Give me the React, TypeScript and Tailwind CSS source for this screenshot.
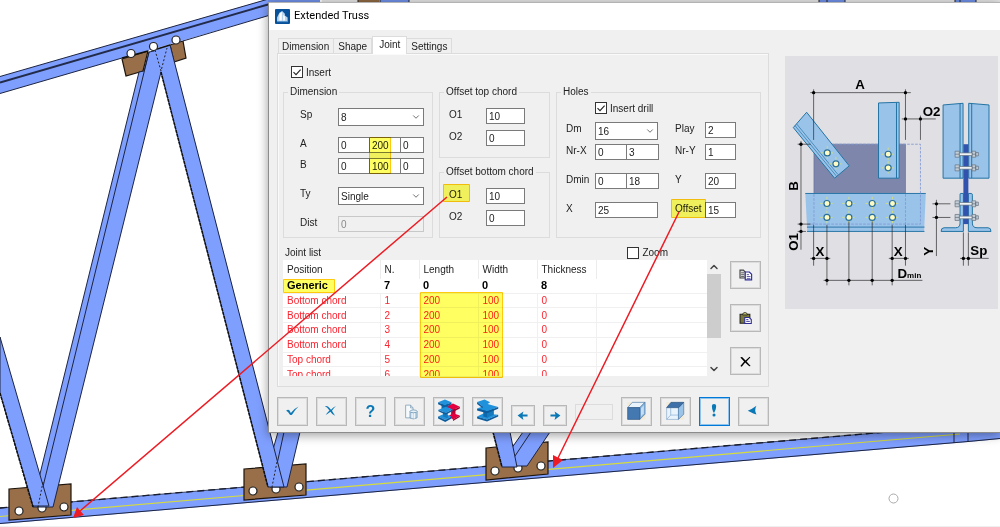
import React from 'react';
import { ChevronDown, ChevronUp } from 'lucide-react';

interface FieldProps {
  id: string;
  value: string;
  label?: string;
  className?: string;
  disabled?: boolean;
}

const TextField: React.FC<FieldProps> = ({ id, value, label, className = '', disabled }) => (
  <input
    id={id}
    type="text"
    aria-label={label}
    defaultValue={value}
    disabled={disabled}
    className={`h-4 min-w-0 border border-[#7a7a7a] bg-white pl-[2px] pt-px leading-[13px] text-[#222] outline-none disabled:border-[#c8c8c8] disabled:bg-[#f0f0f0] disabled:text-[#8a8a8a] ${className}`}
  />
);

const SelectField: React.FC<FieldProps> = ({ id, value, className = '' }) => (
  <div className={`relative h-[18px] ${className}`}>
    <select
      id={id}
      defaultValue={value}
      className="h-full w-full appearance-none border border-[#7a7a7a] bg-white pl-[2px] text-[#222] outline-none"
    >
      <option>{value}</option>
    </select>
    <ChevronDown size={10} strokeWidth={2} className="pointer-events-none absolute right-[3px] top-1 text-[#555]" />
  </div>
);

const Label: React.FC<{ htmlFor: string; className?: string; children: React.ReactNode }> = ({
  htmlFor,
  className = '',
  children,
}) => (
  <label htmlFor={htmlFor} className={`shrink-0 leading-[13px] ${className}`}>
    {children}
  </label>
);

const CheckField: React.FC<{ id: string; label: string; checked?: boolean }> = ({ id, label, checked }) => (
  <div className="flex h-3 items-center gap-[3px]">
    <span className="relative flex h-3 w-3">
      <input
        id={id}
        type="checkbox"
        defaultChecked={checked}
        className="peer h-3 w-3 appearance-none border border-[#333] bg-white"
      />
      <svg viewBox="0 0 12 12" className="pointer-events-none invisible absolute inset-0 h-3 w-3 peer-checked:visible">
        <path d="M2.5 6.2 5 8.6 9.6 3.6" fill="none" stroke="#222" strokeWidth="1.1" />
      </svg>
    </span>
    <label htmlFor={id}>{label}</label>
  </div>
);

const Group: React.FC<{ title: string; className?: string; children: React.ReactNode }> = ({
  title,
  className = '',
  children,
}) => (
  <fieldset className={`border border-[#dcdcdc] ${className}`}>
    <legend className="ml-1 px-[2px] leading-3">{title}</legend>
    {children}
  </fieldset>
);

const OffsetGroup: React.FC<{ title: string; prefix: string }> = ({ title, prefix }) => (
  <Group title={title} className="w-[111px] pb-[11px]">
    <div className="flex flex-col gap-[6px] pl-[9px] pt-[10px]">
      <div className="flex">
        <Label htmlFor={`${prefix}-o1`} className="w-[37px]">O1</Label>
        <TextField id={`${prefix}-o1`} value="10" className="w-[39px]" />
      </div>
      <div className="flex">
        <Label htmlFor={`${prefix}-o2`} className="w-[37px]">O2</Label>
        <TextField id={`${prefix}-o2`} value="0" className="w-[39px]" />
      </div>
    </div>
  </Group>
);

const joints = [
  { position: 'Bottom chord', n: 1 },
  { position: 'Bottom chord', n: 2 },
  { position: 'Bottom chord', n: 3 },
  { position: 'Bottom chord', n: 4 },
  { position: 'Top chord', n: 5 },
  { position: 'Top chord', n: 6 },
];

const JointTable = () => (
  <div className="flex h-[116px] w-0 flex-1">
    <div className="h-full min-w-0 flex-1 overflow-hidden bg-white">
      <table className="h-[122px] w-full table-fixed border-collapse text-left">
        <colgroup>
          <col className="w-[97px]" />
          <col className="w-[39px]" />
          <col className="w-[59px]" />
          <col className="w-[59px]" />
          <col className="w-[59px]" />
          <col />
        </colgroup>
        <thead>
          <tr className="h-[19px] text-[#222]">
            {['Position', 'N.', 'Length', 'Width', 'Thickness'].map((name) => (
              <th key={name} className="border-r border-[#ececec] p-0 pl-1 font-normal leading-[13px]">{name}</th>
            ))}
            <th className="p-0" />
          </tr>
        </thead>
        <tbody>
          <tr className="border-b border-[#f0f0f0] text-[11px] font-bold leading-[13px] text-black">
            {['Generic', '7', '0', '0', '8'].map((cell, i) => (
              <td key={i} className="p-0 pl-1">{cell}</td>
            ))}
            <td className="p-0" />
          </tr>
          {joints.map((joint) => (
            <tr key={joint.n} className="border-b border-[#f0f0f0] leading-[13px] text-[#fb2430]">
              {[joint.position, joint.n, 200, 100, 0].map((cell, i) => (
                <td key={i} className="border-r border-[#f0f0f0] p-0 pl-1">{cell}</td>
              ))}
              <td className="p-0" />
            </tr>
          ))}
        </tbody>
      </table>
    </div>
    <div className="flex w-[14px] flex-col items-center bg-[#f0f0f0] text-[#444]">
      <ChevronUp size={12} strokeWidth={3} className="my-px shrink-0" />
      <div className="h-16 w-full bg-[#cdcdcd]" />
      <ChevronDown size={12} strokeWidth={3} className="mb-px mt-auto shrink-0" />
    </div>
  </div>
);

const SideButton: React.FC<{ label: string; children: React.ReactNode }> = ({ label, children }) => (
  <button
    type="button"
    aria-label={label}
    className="flex h-7 w-[31px] items-center justify-center border border-[#b8b8b8] shadow-[inset_0_0_0_1px_#dcdcdc]"
  >
    {children}
  </button>
);

const ToolButton: React.FC<{ label: string; small?: boolean; active?: boolean; children: React.ReactNode }> = ({
  label,
  small,
  active,
  children,
}) => (
  <button
    type="button"
    aria-label={label}
    className={`flex items-center justify-center border ${small ? 'h-[21px] w-6' : 'h-[29px] w-[31px]'} ${
      active ? 'border-[#0078d7] shadow-[inset_0_0_0_1px_#8fc3ec]' : 'border-[#b8b8b8] shadow-[inset_0_0_0_1px_#dcdcdc]'
    }`}
  >
    {children}
  </button>
);

const Toolbar = () => (
  <div className="mt-[10px] flex items-end gap-2 text-[#0b78b6]">
    <ToolButton label="Confirm">
      <svg viewBox="22 38 93 87" className="h-full w-full" fill="currentColor">
        <path d="M48 79Q54 74 59 78L63 86Q73 72 88 65Q77 75 68 90Q62 96 58 89Q55 82 48 79Z" />
      </svg>
    </ToolButton>
    <ToolButton label="Cancel">
      <svg viewBox="139 38 93 87" className="h-full w-full" fill="currentColor">
        <path d="M164 64Q174 62 179 70L184 76Q191 67 200 64Q192 71 187 79L197 95Q189 93 182 82Q174 87 167 93Q171 85 179 78Q172 69 164 64Z" />
      </svg>
    </ToolButton>
    <ToolButton label="Help">
      <span className="text-[16px] font-bold leading-none">?</span>
    </ToolButton>
    <ToolButton label="Load data">
      <svg viewBox="373 38 93 87" className="h-full w-full">
        <path d="M407 61h16l8 9v32h-24z" fill="#f6fafc" stroke="#7d9db5" strokeWidth="2.5" />
        <path d="M423 61v9h8" fill="none" stroke="#7d9db5" strokeWidth="2.5" />
        <path d="M421 81v21q11 7 23 0V81z" fill="#b9d2e4" stroke="#5d86a5" strokeWidth="2" />
        <path d="M428 86v17M435 86v18" stroke="#f2f8fb" strokeWidth="4" />
        <ellipse cx="432.5" cy="81" rx="11.5" ry="4.5" fill="#e6f1f8" stroke="#5d86a5" strokeWidth="2" />
      </svg>
    </ToolButton>
    <ToolButton label="Split beam">
      <svg viewBox="490 38 93 87" className="h-full w-full">
        <path d="M545 67v30l14 7V73z" fill="#b90032" />
        <path d="M527 66l24-10 22 10-22 11z" fill="#e4003f" />
        <path d="M551 77l22-11v6l-22 11z" fill="#a4002d" />
        <path d="M536 96l15-9 22 7-22 13z" fill="#e4003f" />
        <path d="M551 107l22-13v5l-22 13z" fill="#a4002d" />
        <path d="M514 56h22v18h-22z" fill="#0c69ad" />
        <path d="M503 52l22-9 21 9-21 10z" fill="#2092dc" />
        <path d="M503 52l22 10 21-10v6l-21 10-22-10z" fill="#0d5c9d" />
        <path d="M503 98l20-9 23 9-20 11z" fill="#2092dc" />
        <path d="M503 98l23 11 20-11v6l-20 11-23-11z" fill="#0d5c9d" />
        <path d="M519 82l15 4v17l-15-5z" fill="#1479bd" />
        <path d="M504 76l24-10 22 9-23 11z" fill="#2092dc" />
        <path d="M504 76l23 10 23-11v5l-23 12-23-11z" fill="#0d5c9d" />
      </svg>
    </ToolButton>
    <ToolButton label="Beam">
      <svg viewBox="607 38 93 87" className="h-full w-full">
        <path d="M620 98l20-10 48 4-36 15z" fill="#2092dc" />
        <path d="M620 98l32 9 36-15v6l-36 16-32-10z" fill="#0d5c9d" />
        <path d="M634 62l20 16v24l-14-4V78z" fill="#0c69ad" />
        <path d="M652 80l22-8v20l-22 9z" fill="#1479bd" />
        <path d="M620 76l20-7 18 9-8 5z" fill="#0d5c9d" />
        <path d="M620 51l24-8 18 9-8 5 34 10-36 14-32-9 18-7z" fill="#2092dc" />
        <path d="M620 51l18 14v6l-18-14zM620 72l32 9 36-14v6l-36 14-32-9z" fill="#0d5c9d" />
      </svg>
    </ToolButton>
    <ToolButton label="Previous" small>
      <svg viewBox="0 0 24 21" className="h-full w-full" fill="currentColor">
        <path d="M6 10.5 12.5 6 11.5 9.5H17V11.5H11.5L12.5 15.5Z" />
      </svg>
    </ToolButton>
    <ToolButton label="Next" small>
      <svg viewBox="0 0 24 21" className="h-full w-full" fill="currentColor">
        <path d="M18 10.5 11.5 6 12.5 9.5H7V11.5H12.5L11.5 15.5Z" />
      </svg>
    </ToolButton>
    <div className="mb-[6px] h-4 w-[38px] border border-[#dcdcdc]" />
    <ToolButton label="Front view">
      <svg viewBox="364 38 93 87" className="h-full w-full">
        <path d="M381 52v55h55l3-3V52z" fill="#f1ead6" />
        <path d="M382 69l15-17h41l-16 17z" fill="#e8f2fb" stroke="#416f9f" strokeWidth="2" />
        <path d="M421 69l17-17v38l-17 17z" fill="#8fb9e0" stroke="#416f9f" strokeWidth="2" />
        <path d="M425 71l9-9v25l-9 10z" fill="#c5def5" />
        <path d="M382 69h39v38h-39z" fill="#4378b1" stroke="#244f80" strokeWidth="2" />
      </svg>
    </ToolButton>
    <ToolButton label="Top view">
      <svg viewBox="481 38 93 87" className="h-full w-full">
        <path d="M498 52v55h55l3-3V52z" fill="#f1ead6" />
        <path d="M499 69h38v38h-38z" fill="#e9f3fc" stroke="#7da5cc" strokeWidth="2" />
        <path d="M499 107l13-14h25M512 93V70" fill="none" stroke="#7da5cc" strokeWidth="2" />
        <path d="M537 69l17-17v38l-17 17z" fill="#9cc4e8" stroke="#416f9f" strokeWidth="2" />
        <path d="M499 69l14-17h41l-16 17z" fill="#3d70a8" stroke="#244f80" strokeWidth="2" />
      </svg>
    </ToolButton>
    <ToolButton label="Warnings" active>
      <svg viewBox="600 38 93 87" className="h-full w-full" fill="currentColor">
        <path d="M638 64q0-7 7-7t7 7q0 11-6 21h-3q-5-10-5-21z" />
        <circle cx="645" cy="93" r="5" />
      </svg>
    </ToolButton>
    <ToolButton label="Back">
      <svg viewBox="715 38 93 87" className="h-full w-full" fill="currentColor">
        <path d="M743 79Q758 73 771 63Q766 72 767 79Q768 84 771 91Q760 88 753 84Z" />
      </svg>
    </ToolButton>
  </div>
);

const boltHoles = [
  [142, 309], [168, 342], [325, 313], [325, 354],
  [141, 461], [207, 461], [277, 461], [338, 461],
  [141, 503], [207, 503], [277, 503], [338, 503],
];

const dimensionDots = [
  [101, 128], [377, 128], [377, 207], [422, 207], [63, 283], [63, 523], [63, 545],
  [101, 626], [141, 626], [337, 626], [377, 626], [141, 692], [207, 692], [277, 692], [337, 692],
  [470, 462], [470, 503], [551, 626], [566, 626],
];

// Joint diagram: front elevation on the left, section on the right
const JointDiagram = () => (
  <svg
    viewBox="15 18 640 760"
    role="img"
    aria-label="Joint dimensions"
    className="mt-[26px] h-[253px] w-[213px] shrink-0 bg-[#e0dfe4] font-['Liberation_Sans',Arial,sans-serif]"
  >
    <path d="M102 283h275v150H102z" fill="#7e87ab" stroke="#65719d" strokeWidth="2" />
    <path d="M76 431h362l-5 114H82z" fill="#9ac3ea" />
    <path d="M76 431h362M81 532h353M81 545h353" stroke="#2a76a8" strokeWidth="3" />
    <path d="M82 283h340v240H82M377 433v90M102 433v90" fill="none" stroke="#7f96d2" strokeWidth="2.5" strokeDasharray="8 4" />
    <g stroke="#2373a3" strokeWidth="3" fill="#9ac3ea">
      <path d="M80 187 208 348 164 385 40 233z" />
      <path d="M45 227 169 378M50 222 174 374" fill="none" strokeWidth="2" />
      <path d="M296 159 358 157V385H296z" />
      <path d="M350 158V385" fill="none" />
      <path d="M490 165 550 160V385H490zM567 160 628 165V385H567z" />
      <path d="M541 162V385M576 162V385" fill="none" />
    </g>
    <path d="M542 431q-1 0-1 5v84q0 14-14 14h-34q-9 0-9 11h67V431zM575 431q3 0 3 5v84q0 14 14 14h33q9 0 9 11h-68V431z" fill="#9ac3ea" stroke="#2373a3" strokeWidth="3" />
    <path d="M551 283h15v240h-15z" fill="#3152ad" />
    {[313, 354, 462, 503].map((y) => (
      <g key={y} stroke="#5e6b78" strokeWidth="2">
        <path d={`M526 ${y - 9}h13v18h-13zM577 ${y - 9}h11v18h-11zM588 ${y - 5}h8v10h-8zM526 ${y}h13M577 ${y}h11`} fill="#c3ced7" />
        <path d={`M539 ${y - 4}h38v8h-38z`} fill="#eef4f6" />
      </g>
    ))}
    {boltHoles.map(([x, y]) => (
      <g key={`${x}-${y}`}>
        <path d={`M${x - 20} ${y}h40M${x} ${y - 20}v40`} stroke="#d9e36b" strokeWidth="2.5" strokeDasharray="7 3" />
        <circle cx={x} cy={y} r="9" fill="#fffbc4" stroke="#2a6f96" strokeWidth="3.5" />
      </g>
    ))}
    <path
      d="M101 118V270M377 118V270M91 128H393M366 207H468M422 197V270M53 283H92M63 273V600M53 523H92M53 545H78M101 525V648M377 525V648M141 525V707M207 515V707M277 515V707M337 525V707M91 626H151M327 626H387M131 692H428M470 450V619M458 462H512M458 503H512M551 548V648M566 548V648M541 626H627"
      stroke="#222"
      strokeWidth="2"
    />
    {dimensionDots.map(([x, y]) => (
      <circle key={`${x}-${y}`} cx={x} cy={y} r="5" />
    ))}
    <g fontSize="40" fontWeight="bold">
      <text x="226" y="118">A</text>
      <text x="429" y="199">O2</text>
      <text x="107" y="618">X</text>
      <text x="342" y="618">X</text>
      <text x="572" y="615">Sp</text>
      <text x="353" y="684">D<tspan fontSize="24">min</tspan></text>
      <text transform="translate(54 423) rotate(-90)">B</text>
      <text transform="translate(54 603) rotate(-90)">O1</text>
      <text transform="translate(461 618) rotate(-90)">Y</text>
    </g>
  </svg>
);

const plates = [
  '9,489 71,484 71,515 9,520',
  '244,469 306,464 306,495 244,500',
  '486,448 548,442 548,474 486,480',
  '122,59 148,51 143,71 126,76',
  '170,45 183,41 186,58 174,62',
];

const bolts = [
  [19, 511], [42, 508], [64, 507],
  [253, 491], [276, 489], [299, 487],
  [495, 471], [518, 468], [541, 466],
];

const TrussView = () => (
  <svg width="1000" height="527" viewBox="0 0 1000 527" aria-hidden="true" className="absolute left-0 top-0">
    {/* bottom chord */}
    <path d="M0 508 887 432H1000V439L968 442 0 524z" fill="#7f9fff" />
    <path d="M0 523.5 968 441.5 1000 438.5" fill="none" stroke="#1c2440" />
    <path d="M0 508 887 432" stroke="#111" strokeWidth="1.3" strokeDasharray="7 4" />
    <path d="M0 508 887 432" stroke="#1c2440" strokeWidth="0.8" />
    <path d="M0 516.5 960 434" stroke="#d6dc3c" strokeWidth="1.2" />
    <path d="M954 432V443M968 432V442" stroke="#1c2440" />
    {plates.map((points) => (
      <polygon key={points} points={points} fill="#986f49" stroke="#1d150d" strokeWidth="1.2" />
    ))}
    {bolts.map(([x, y]) => (
      <circle key={x} cx={x} cy={y} r="4" fill="#fff" stroke="#222" strokeWidth="1.2" />
    ))}
    <g fill="#7f9fff" stroke="#1c2440">
      {/* rising webs */}
      <path d="M149 52 144 71 139 72 38 482 33 507H53L161 72 170 48z" />
      <path d="M149 52 38 507" />
      <path d="M278 432 270 460V487H287L300 432z" />
      <path d="M284 432 272 487" />
      <path d="M523 432 509 452V466H527L550 432z" />
      <path d="M531 432 509 465" />
      {/* falling webs */}
      <path d="M0 337 49 506H33L0 393z" />
      <path d="M154 50 170 45 284 487H268L161 72z" stroke="none" />
      <path d="M170 45 284 487H268L161 72" />
      <path d="M493 432 502 467H517L510 432z" />
    </g>
    <path d="M0 393 33 507M161 72 268 487M493 432 502 467" fill="none" stroke="#111" strokeWidth="1.5" strokeDasharray="3 1" />
    <path d="M43 482 38 507M277 462 272 487M155 50 161 71 167 48" fill="none" stroke="#222" strokeDasharray="2 2" />
    {/* top chord */}
    <path d="M0 76.5 268-1H278V13L0 93.5z" fill="#7f9fff" />
    <path d="M0 76.5 272-2M0 93.5 122 58M183 41 272 14.5" stroke="#1c2440" />
    <path d="M0 82.5 268 4.5" stroke="#222b4a" strokeWidth="2" />
    <path d="M122 58 148 51M157 49 170 45" stroke="#111" strokeWidth="1.8" />
    {[[131, 53.5], [153.5, 46.5], [176, 40]].map(([x, y]) => (
      <circle key={x} cx={x} cy={y} r="4" fill="#fff" stroke="#222" strokeWidth="1.2" />
    ))}
    <path d="M322 0H1000V2H322z" fill="#e6e6e6" />
    <path d="M268 0H320V2H268zM380 0H409V2H380zM819 0H845V2H819zM955 0H976V2H955z" fill="#6f90e8" />
    <path d="M358 0H379V2H358z" fill="#8f6842" />
    <path d="M358 0V2M380 0V2M409 0V2M819 0V2M827 0V2M845 0V2M955 0V2M960 0V2M976 0V2" stroke="#222" />
    <circle cx="893.5" cy="498.5" r="4.5" fill="#fff" stroke="#aaa" />
    <path d="M0 526.5H1000" stroke="#efefef" />
  </svg>
);

const Annotations = () => (
  <>
    <svg
      width="1000"
      height="527"
      viewBox="0 0 1000 527"
      aria-hidden="true"
      className="pointer-events-none absolute left-0 top-0 mix-blend-multiply"
    >
      <g fill="#ffff62" stroke="#ffc90e">
        <path d="M369.5 137.5h21v36h-21z" />
        <path d="M443.5 184.5h26v17h-26z" />
        <path d="M671.5 199.5h34v18h-34z" />
        <path d="M283.5 279.5h51v13h-51z" />
        <path d="M420.5 292.5h82v85h-82z" />
      </g>
    </svg>
    <svg
      width="1000"
      height="527"
      viewBox="0 0 1000 527"
      aria-hidden="true"
      className="pointer-events-none absolute left-0 top-0"
    >
      <path d="M447 197 80 511M679 212 558 458" stroke="#ed1c24" strokeWidth="1.5" />
      <path d="M73 518 77 507 84 515zM553 468V455L563 460z" fill="#ed1c24" />
    </svg>
  </>
);

const tabs = ['Dimension', 'Shape', 'Joint', 'Settings'];

export default function App() {
  return (
    <div className="relative min-h-screen overflow-hidden bg-white font-['Liberation_Sans',Arial,sans-serif] text-[10px] text-[#222]">
      <TrussView />
      <main className="absolute left-[268px] right-0 top-[2px] border-b border-l border-t border-[#8c8c8c] border-t-[#b4b4b4] bg-[#f0f0f0] pb-[6px] shadow-[0_2px_10px_rgba(0,0,0,0.4)]">
        <header className="flex h-[27px] items-center gap-1 bg-white pl-[6px]">
          <svg viewBox="0 0 44 44" className="h-[15px] w-[15px]">
            <rect width="44" height="44" rx="3" fill="#07519a" />
            <path d="M6 36V25l7-14 8-5 8 8v5l8 6v11z" fill="#b8d3ec" />
            <path d="M13 34V15l7-7v26zM24 34V17l5 5v12z" fill="#fff" />
            <path d="M6 37h32" stroke="#5c97cc" strokeWidth="3" />
          </svg>
          <h1 className="font-[Roboto,sans-serif] text-[11px] text-black">Extended Truss</h1>
        </header>

        <div className="flex gap-4 pl-2">
          <div className="shrink-0">
            <div role="tablist" className="flex h-[23px] items-end pl-px">
              {tabs.map((tab) => (
                <button
                  key={tab}
                  type="button"
                  role="tab"
                  aria-selected={tab === 'Joint'}
                  className={
                    tab === 'Joint'
                      ? 'relative -mb-px h-[18px] border border-b-0 border-[#dcdcdc] bg-white px-[6px] pb-[2px]'
                      : 'h-[15px] border border-b-0 border-l-0 border-[#dcdcdc] px-[4px] first:border-l first:pl-[3px]'
                  }
                >
                  {tab}
                </button>
              ))}
            </div>

            <section className="border border-[#dcdcdc] pb-[10px] pl-[5px] pr-[7px] pt-3 shadow-[inset_1px_1px_0_#fafafa]">
              <div className="pl-2">
                <CheckField id="insert" label="Insert" checked />
              </div>

              <div className="mt-2 flex gap-[6px]">
                <Group title="Dimension" className="w-[150px]">
                  <div className="flex flex-col pl-4 pt-[10px]">
                    <div className="flex">
                      <Label htmlFor="sp" className="w-[38px]">Sp</Label>
                      <SelectField id="sp" value="8" className="w-[86px]" />
                    </div>
                    <div className="mt-[11px] flex">
                      <Label htmlFor="a" className="w-[38px]">A</Label>
                      <TextField id="a" value="0" className="w-8" />
                      <TextField id="a-length" label="A length" value="200" className="-ml-px w-8" />
                      <TextField id="a-end" label="A end" value="0" className="-ml-px w-6" />
                    </div>
                    <div className="mt-[5px] flex">
                      <Label htmlFor="b" className="w-[38px]">B</Label>
                      <TextField id="b" value="0" className="w-8" />
                      <TextField id="b-length" label="B length" value="100" className="-ml-px w-8" />
                      <TextField id="b-end" label="B end" value="0" className="-ml-px w-6" />
                    </div>
                    <div className="mt-[13px] flex">
                      <Label htmlFor="ty" className="w-[38px]">Ty</Label>
                      <SelectField id="ty" value="Single" className="w-[86px]" />
                    </div>
                    <div className="mt-[11px] flex">
                      <Label htmlFor="dist" className="w-[38px]">Dist</Label>
                      <TextField id="dist" value="0" disabled className="w-[86px]" />
                    </div>
                  </div>
                </Group>

                <div className="flex flex-col gap-2">
                  <OffsetGroup title="Offset top chord" prefix="top" />
                  <OffsetGroup title="Offset bottom chord" prefix="bottom" />
                </div>

                <Group title="Holes" className="w-[205px]">
                  <div className="pl-[38px] pt-1">
                    <CheckField id="drill" label="Insert drill" checked />
                  </div>
                  <div className="mt-2 grid grid-cols-[29px_64px_30px_47px] pl-[9px]">
                    <Label htmlFor="dm">Dm</Label>
                    <SelectField id="dm" value="16" className="mr-px" />
                    <Label htmlFor="play" className="ml-4 w-[30px]">Play</Label>
                    <TextField id="play" value="2" className="ml-4" />
                  </div>
                  <div className="mt-1 grid grid-cols-[29px_64px_30px_47px] pl-[9px]">
                    <Label htmlFor="nrx">Nr-X</Label>
                    <div className="flex">
                      <TextField id="nrx" value="0" className="w-8" />
                      <TextField id="nrx-max" label="Nr-X second" value="3" className="-ml-px w-[33px]" />
                    </div>
                    <Label htmlFor="nry" className="ml-4 w-[30px]">Nr-Y</Label>
                    <TextField id="nry" value="1" className="ml-4" />
                  </div>
                  <div className="mt-[13px] grid grid-cols-[29px_64px_30px_47px] pl-[9px]">
                    <Label htmlFor="dmin">Dmin</Label>
                    <div className="flex">
                      <TextField id="dmin" value="0" className="w-8" />
                      <TextField id="dmin-max" label="Dmin second" value="18" className="-ml-px w-[33px]" />
                    </div>
                    <Label htmlFor="y" className="ml-4">Y</Label>
                    <TextField id="y" value="20" className="ml-4" />
                  </div>
                  <div className="mt-[13px] grid grid-cols-[29px_64px_30px_47px] pl-[9px]">
                    <Label htmlFor="x">X</Label>
                    <TextField id="x" value="25" className="mr-px" />
                    <Label htmlFor="offset" className="ml-4 w-[30px]">Offset</Label>
                    <TextField id="offset" value="15" className="ml-4" />
                  </div>
                </Group>
              </div>

              <div className="mt-[7px] flex h-[15px] items-center justify-between pl-[2px] pr-[93px]">
                <h2>Joint list</h2>
                <CheckField id="zoom" label="Zoom" />
              </div>

              <div className="flex gap-[9px]">
                <JointTable />
                <div className="flex flex-col gap-[15px] pt-px">
                  <SideButton label="Copy">
                    <svg viewBox="0 0 36 32" className="h-3 w-[14px]">
                      <path d="M2 3h9l5 5v16H2z" fill="#ddd" stroke="#444" strokeWidth="3" />
                      <path d="M5 10h8M5 15h8M5 20h8" stroke="#444" strokeWidth="2" />
                      <path d="M16 8h11l6 6v15H16z" fill="#fff" stroke="#2e2c94" strokeWidth="3" />
                      <path d="M20 15h6M20 20h10M20 25h10" stroke="#2e2c94" strokeWidth="2" />
                    </svg>
                  </SideButton>
                  <SideButton label="Paste">
                    <svg viewBox="0 0 36 36" className="h-[13px] w-[13px]">
                      <path d="M3 6h27v25H3z" fill="#77783a" stroke="#222" strokeWidth="3" />
                      <path d="M10 8V5l4-3h5l4 3v3z" fill="#d8d870" stroke="#222" strokeWidth="2.5" />
                      <path d="M16 15h12l6 6v11H16z" fill="#fff" stroke="#2e2c94" strokeWidth="3" />
                      <path d="M20 21h6M20 26h10" stroke="#2e2c94" strokeWidth="2.5" />
                    </svg>
                  </SideButton>
                  <SideButton label="Delete">
                    <svg viewBox="0 0 32 32" className="h-[11px] w-[11px]">
                      <path d="M1 4Q6 1 9 6L16 13 28 2 30 4 19 16 31 29 27 30 15 19 5 31 1 29 12 16z" />
                    </svg>
                  </SideButton>
                </div>
              </div>
            </section>

            <Toolbar />
          </div>

          <JointDiagram />
        </div>
      </main>
      <Annotations />
    </div>
  );
}
